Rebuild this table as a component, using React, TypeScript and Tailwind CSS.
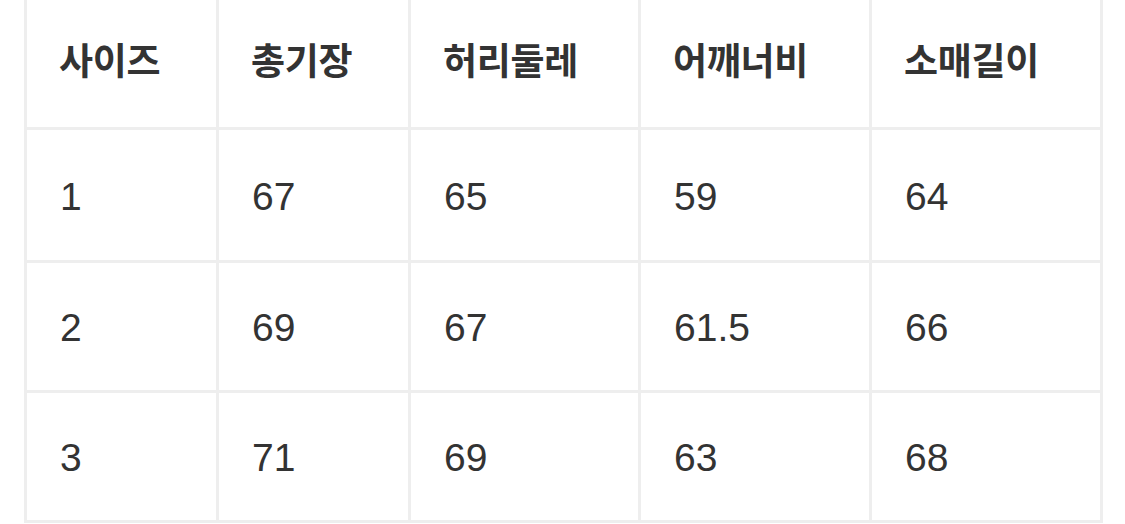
const HEADERS = ["사이즈", "총기장", "허리둘레", "어깨너비", "소매길이"];

const ROWS = [
  ["1", "67", "65", "59", "64"],
  ["2", "69", "67", "61.5", "66"],
  ["3", "71", "69", "63", "68"],
];

const App = () => {
  return (
    <div
      className="w-[1125px] h-[524px] bg-white overflow-hidden"
      style={{ fontFamily: '"Liberation Sans", "Noto Sans CJK KR", sans-serif' }}
    >
      <div className="ml-[24px] w-[1079px] bg-[#eeeeee] px-[3px] pb-[3px]">
        <div className="grid grid-cols-[189px_189px_227px_228px_228px] grid-rows-[127px_130px_127px_127px] gap-[3px]">
          {HEADERS.map((h) => (
            <div key={h} className="bg-white flex items-center pl-[32px] pr-2 pb-[8px]">
              <span className="text-[37px] font-bold text-[#333333] tracking-[-0.3px]" style={{ fontFamily: '"Noto Sans CJK KR", sans-serif' }}>
                {h}
              </span>
            </div>
          ))}
          {ROWS.map((row, r) =>
            row.map((cell, c) => (
              <div key={`${r}-${c}`} className="bg-white flex items-center pl-[33px] pr-2 pt-[4px]">
                <span className="text-[39px] text-[#333333]">{cell}</span>
              </div>
            ))
          )}
        </div>
      </div>
    </div>
  );
};

export default App;
